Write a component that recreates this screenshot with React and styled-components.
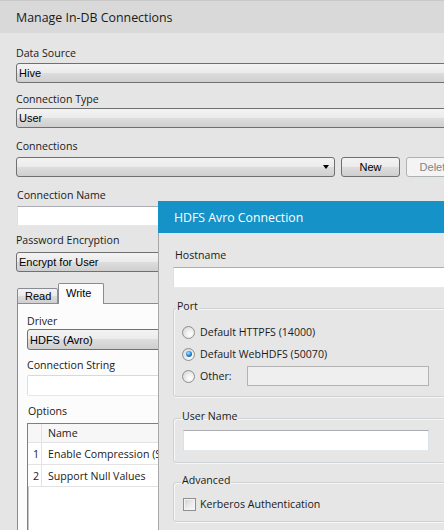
import React from "react";
import styled, { createGlobalStyle } from "styled-components";

const UI = '"Open Sans", "Noto Sans", sans-serif';
const CTRL = '"Liberation Sans", Arial, sans-serif';

const GlobalStyle = createGlobalStyle`
  html, body { margin: 0; padding: 0; background: #e5e5e5; }
  body { font-family: ${UI}; overflow: hidden; }
  * { box-sizing: border-box; }
`;

const Window = styled.div`
  position: relative;
  width: 444px;
  height: 530px;
  overflow: hidden;
  background: #e5e5e5;
  color: #1a1a1a;
`;

const TitleBar = styled.div`
  height: 33px;
  border-top: 1px solid #c9c9c9;
  background: #d9d9d9;
  display: flex;
  align-items: center;
  padding-left: 16px;
  font-size: 12.4px;
  white-space: nowrap;
`;

const Body = styled.div`
  padding: 13px 0 0 16px;
  display: flex;
  flex-direction: column;
  align-items: flex-start;
`;

const Label = styled.div`
  font-size: 10.6px;
  line-height: 14px;
  height: 14px;
  white-space: nowrap;
  margin-top: ${(p) => p.$mt || 0}px;
  margin-bottom: ${(p) => p.$mb || 0}px;
  padding-left: ${(p) => p.$indent || 0}px;
`;

const Combo = styled.div`
  width: ${(p) => p.$w || 480}px;
  height: ${(p) => p.$h || 20}px;
  flex-shrink: 0;
  border: 1px solid #707070;
  border-radius: 3px;
  background: linear-gradient(#f3f3f3 0%, #ebebeb 50%, #dddddd 50%, #cfcfcf 100%);
  font-family: ${CTRL};
  font-size: 11px;
  color: #000;
  display: flex;
  align-items: center;
  padding: 0 5px 0 2px;
  white-space: nowrap;
`;

const Arrow = styled.span`
  margin-left: auto;
  width: 0;
  height: 0;
  border-left: 3.5px solid transparent;
  border-right: 3.5px solid transparent;
  border-top: 4px solid #000;
`;

const ButtonRow = styled.div`
  display: flex;
  gap: 6px;
`;

const Button = styled.div`
  width: 59px;
  height: 20px;
  flex-shrink: 0;
  border: 1px solid ${(p) => (p.$disabled ? "#adb2b5" : "#707070")};
  border-radius: 3px;
  background: ${(p) =>
    p.$disabled
      ? "#f4f4f4"
      : "linear-gradient(#f3f3f3 0%, #ebebeb 50%, #dddddd 50%, #cfcfcf 100%)"};
  color: ${(p) => (p.$disabled ? "#838383" : "#000")};
  font-family: ${CTRL};
  font-size: 11px;
  display: flex;
  align-items: center;
  justify-content: center;
`;

const TextBox = styled.div`
  width: ${(p) => p.$w || 480}px;
  height: ${(p) => p.$h || 20}px;
  flex-shrink: 0;
  background: ${(p) => (p.$disabled ? "#efefef" : "#fff")};
  border: 1px solid ${(p) => (p.$disabled ? "#b3b3b3" : "#dbdfe6")};
  border-top-color: ${(p) => (p.$disabled ? "#b3b3b3" : p.$soft ? "#d6d9de" : "#abadb3")};
  border-bottom-color: ${(p) => (p.$disabled ? "#b3b3b3" : "#e3e9ef")};
  border-radius: ${(p) => (p.$soft ? 2 : 0)}px;
  margin-left: ${(p) => p.$ml || 0}px;
`;

const TabStrip = styled.div`
  display: flex;
  align-items: flex-end;
  padding-left: 1px;
  margin-top: 11px;
  margin-bottom: -1px;
  position: relative;
  z-index: 1;
  font-family: ${CTRL};
  font-size: 11px;
  color: #000;
`;

const Tab = styled.div`
  width: ${(p) => p.$w}px;
  height: ${(p) => (p.$active ? 21 : 16)}px;
  border: 1px solid #898c95;
  border-bottom: ${(p) => (p.$active ? "none" : "1px solid #898c95")};
  border-radius: 2px 2px 0 0;
  background: ${(p) =>
    p.$active ? "#fcfcfc" : "linear-gradient(#f3f3f3 0%, #ebebeb 50%, #dddddd 50%, #cfcfcf 100%)"};
  display: flex;
  align-items: center;
  padding-left: 7px;
  padding-bottom: ${(p) => (p.$active ? 3 : 0)}px;
  margin-left: ${(p) => (p.$active ? 0 : 0)}px;
`;

const TabPanel = styled.div`
  margin-left: 1px;
  width: 470px;
  height: 260px;
  border: 1px solid #898c95;
  background: #fcfcfc;
  padding: 10px 0 0 9px;
  display: flex;
  flex-direction: column;
  align-items: flex-start;
`;

const Grid = styled.div`
  width: 420px;
  height: 120px;
  border-left: 1px solid #7f7f7f;
  border-top: 1px solid #7f7f7f;
  box-shadow: inset 1px 1px 0 #c4c4c4;
  background: #fff;
  display: flex;
  flex-direction: column;
  font-size: 10.6px;
`;

const GridRow = styled.div`
  display: grid;
  grid-template-columns: 14px 1fr;
  height: ${(p) => (p.$header ? 19 : 22)}px;
  border-bottom: 1px solid #e3e3e3;
  background: ${(p) => (p.$header ? "#f7f7f7" : "#fff")};
`;

const Cell = styled.div`
  display: flex;
  align-items: center;
  white-space: nowrap;
  padding-left: ${(p) => (p.$num ? 5 : 6)}px;
  border-right: ${(p) => (p.$num ? "1px solid #e3e3e3" : "none")};
`;

/* ---------- modal ---------- */

const Modal = styled.div`
  position: absolute;
  left: 158px;
  top: 201px;
  width: 300px;
  height: 340px;
  display: flex;
  flex-direction: column;
`;

const ModalTitle = styled.div`
  height: 32px;
  flex-shrink: 0;
  background: #1592c7;
  color: #fff;
  font-size: 12.3px;
  display: flex;
  align-items: center;
  padding-left: 16px;
  white-space: nowrap;
`;

const ModalBody = styled.div`
  flex: 1;
  background: #e6e6e6;
  border-left: 1px solid #a8a8a8;
  padding: 15px 0 0 14px;
  display: flex;
  flex-direction: column;
  align-items: flex-start;
`;

const Group = styled.fieldset`
  margin: ${(p) => p.$mt}px 0 0 0;
  width: 290px;
  min-width: 0;
  border: 1px solid #cfd2d4;
  border-radius: 3px;
  box-shadow: inset 1px 1px 0 #f7f7f7, 1px 1px 0 #f7f7f7;
  padding: ${(p) => p.$pt}px 0 ${(p) => p.$pb}px 8px;
  display: flex;
  flex-direction: column;
  align-items: flex-start;
`;

const Legend = styled.legend`
  font-size: 10.6px;
  line-height: 14px;
  padding: 0 1px 4px 1px;
  margin-left: ${(p) => p.$ml || 0}px;
  color: #1a1a1a;
  white-space: nowrap;
`;

const OptionRow = styled.div`
  display: flex;
  align-items: center;
  height: ${(p) => p.$h || 22}px;
  gap: ${(p) => p.$gap || 5}px;
  font-size: 10.6px;
  white-space: nowrap;
`;

const Radio = styled.span`
  width: 13px;
  height: 13px;
  flex-shrink: 0;
  border-radius: 50%;
  border: 1px solid #8e8f8f;
  background: radial-gradient(circle at 65% 65%, #ffffff 0%, #f1f1f1 35%, #cdcdcd 100%);
  display: flex;
  align-items: center;
  justify-content: center;
  &::after {
    content: "";
    display: ${(p) => (p.$checked ? "block" : "none")};
    width: 6px;
    height: 6px;
    border-radius: 50%;
    background: radial-gradient(circle at 40% 35%, #b9e6fb 0%, #2d8fd8 45%, #123f78 100%);
  }
`;

const Check = styled.span`
  width: 13px;
  height: 13px;
  flex-shrink: 0;
  border: 1px solid #8e8f8f;
  background: linear-gradient(135deg, #cdcdcd 0%, #eeeeee 60%, #f8f8f8 100%);
  box-shadow: inset 0 0 0 1px #f4f4f4;
  margin-left: 1px;
`;

export default function App() {
  return (
    <Window>
      <GlobalStyle />
      <TitleBar>Manage In-DB Connections</TitleBar>
      <Body>
        <Label $mb={3}>Data Source</Label>
        <Combo>Hive</Combo>

        <Label $mt={9} $mb={2}>Connection Type</Label>
        <Combo>User</Combo>

        <Label $mt={11} $mb={4}>Connections</Label>
        <ButtonRow>
          <Combo $w={319}>
            <Arrow />
          </Combo>
          <Button>New</Button>
          <Button $disabled>Delete</Button>
        </ButtonRow>

        <Label $mt={11} $mb={4} $indent={1}>Connection Name</Label>
        <TextBox $ml={1} />

        <Label $mt={7} $mb={5}>Password Encryption</Label>
        <Combo>Encrypt for User</Combo>

        <TabStrip>
          <Tab $w={41}>Read</Tab>
          <Tab $w={46} $active>Write</Tab>
        </TabStrip>
        <TabPanel>
          <Label $mb={1}>Driver</Label>
          <Combo $w={420} $h={21}>HDFS (Avro)</Combo>

          <Label $mt={8} $mb={3}>Connection String</Label>
          <TextBox $w={420} $h={21} $soft />

          <Label $mt={8} $mb={5} $indent={1}>Options</Label>
          <Grid>
            <GridRow $header>
              <Cell $num />
              <Cell>Name</Cell>
            </GridRow>
            <GridRow>
              <Cell $num>1</Cell>
              <Cell>Enable Compression (Snappy)</Cell>
            </GridRow>
            <GridRow>
              <Cell $num>2</Cell>
              <Cell>Support Null Values</Cell>
            </GridRow>
          </Grid>
        </TabPanel>
      </Body>

      <Modal>
        <ModalTitle>HDFS Avro Connection</ModalTitle>
        <ModalBody>
          <Label $mb={5} $indent={2}>Hostname</Label>
          <TextBox $w={300} $h={21} />

          <Group $mt={11} $pt={4} $pb={9}>
            <Legend $ml={-6}>Port</Legend>
            <OptionRow>
              <Radio />
              <span>Default HTTPFS (14000)</span>
            </OptionRow>
            <OptionRow>
              <Radio $checked />
              <span>Default WebHDFS (50070)</span>
            </OptionRow>
            <OptionRow>
              <Radio />
              <span>Other:</span>
              <TextBox $w={182} $disabled $ml={10} />
            </OptionRow>
          </Group>

          <Group $mt={12} $pt={3} $pb={11}>
            <Legend $ml={-1}>User Name</Legend>
            <TextBox $w={246} $h={21} $ml={1} />
          </Group>

          <Group $mt={10} $pt={4} $pb={8}>
            <Legend $ml={-1}>Advanced</Legend>
            <OptionRow $h={18} $gap={4}>
              <Check />
              <span>Kerberos Authentication</span>
            </OptionRow>
          </Group>
        </ModalBody>
      </Modal>
    </Window>
  );
}
